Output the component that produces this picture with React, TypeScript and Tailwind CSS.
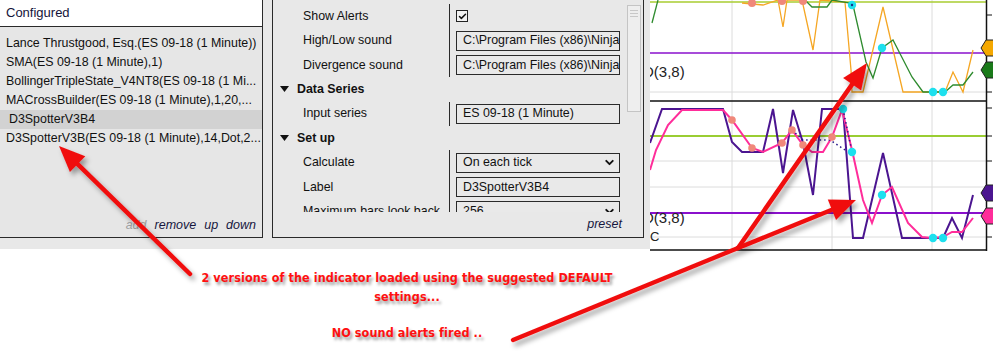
import { Check, ChevronDown } from "lucide-react";

const listItems = [
  "Lance Thrustgood, Esq.(ES 09-18 (1 Minute))",
  "SMA(ES 09-18 (1 Minute),1)",
  "BollingerTripleState_V4NT8(ES 09-18 (1 Mi...",
  "MACrossBuilder(ES 09-18 (1 Minute),1,20,...",
  "D3SpotterV3B4",
  "D3SpotterV3B(ES 09-18 (1 Minute),14,Dot,2...",
];

const Triangle = () => (
  <svg width="9" height="7" viewBox="0 0 9 7" className="mr-[8px]">
    <polygon points="0,0 9,0 4.5,6" fill="#111" />
  </svg>
);

const Box = ({ children }: { children: React.ReactNode }) => (
  <div className="w-[164px] h-[20px] border border-[#2a2a2a] bg-[#e9e9e9] flex items-center pl-[6px] pr-[3px] overflow-hidden whitespace-nowrap">
    {children}
  </div>
);

const PropRow = ({ label, children }: { label: string; children: React.ReactNode }) => (
  <div className="h-[24.4px] flex items-stretch">
    <div className="w-[176px] pl-[30px] flex items-center whitespace-nowrap">{label}</div>
    <div className="border-l border-[#2a2a2a] pl-[6px] flex items-center">{children}</div>
  </div>
);

const Header = ({ label }: { label: string }) => (
  <div className="h-[24.4px] flex items-center pl-[7px] font-bold">
    <Triangle />
    {label}
  </div>
);

const Chart = () => {
  const orange =
    "742,3 763,5 778,0 783,27 787,0 802,0 813,50 820,0 845,2 851,70 852,92 863,92 883,7 903,92 945,92 953,72 963,92 973,50";
  const green2 =
    "805,0 812,7 827,7 832,0 850,3 853,5 866,62 873,78 882,48 893,40 912,77 923,92 945,92 953,85 963,85 973,72";
  const indigo =
    "650,143 662,109 723,109 732,142 742,152 763,152 773,109 783,173 793,110 803,143 813,195 822,109 843,109 853,238 863,238 883,153 902,238 943,238 952,218 962,238 973,195";
  const pink =
    "650,170 656,150 668,125 682,110 723,110 732,120 752,148 763,152 782,143 792,130 803,145 812,152 823,152 832,137 842,110 852,150 863,200 872,223 882,195 892,187 908,223 922,237 932,238 943,237 952,232 962,232 973,218";
  const ticks = [15, 53, 92, 108, 136, 161, 187, 213, 237];
  const marker = (y: number, c: string) => (
    <polygon
      key={y}
      points={`981,${y} 986,${y - 8} 994,${y - 8} 994,${y + 8} 986,${y + 8}`}
      fill={c}
      stroke="#222"
      strokeWidth="1"
    />
  );
  return (
    <svg width="343" height="252" viewBox="650 0 343 252" className="block">
      <rect x="650" y="0" width="343" height="252" fill="#fff" />
      {[732, 832, 932].map((x) => (
        <line key={x} x1={x} y1="0" x2={x} y2="250" stroke="#dcdcdc" strokeWidth="1" />
      ))}
      {[92, 161, 187, 237].map((y) => (
        <line key={y} x1="650" y1={y} x2="986" y2={y} stroke="#dcdcdc" strokeWidth="1" />
      ))}
      <line x1="650" y1="2" x2="986" y2="2" stroke="#a8cc30" strokeWidth="1.5" />
      <line x1="650" y1="53" x2="986" y2="53" stroke="#8a10cc" strokeWidth="1.5" />
      <polyline points={orange} fill="none" stroke="#f5a623" strokeWidth="1.3" />
      <polyline points="652,23 658,0" fill="none" stroke="#2e8b2e" strokeWidth="1.3" />
      <polyline points={green2} fill="none" stroke="#2e8b2e" strokeWidth="1.3" />
      <circle cx="752" cy="3" r="4" fill="#f0887a" />
      <circle cx="782" cy="1" r="4" fill="#f0887a" />
      <circle cx="803" cy="1" r="4" fill="#f0887a" />
      {[
        [852, 5],
        [882, 48],
        [933, 92],
        [943, 92],
      ].map(([x, y]) => (
        <circle key={`u${x}`} cx={x} cy={y} r="4.2" fill="#1ee0ee" />
      ))}
      <circle cx="852" cy="5" r="1.2" fill="#1a2a8a" />
      <text x="643" y="77" fontSize="15" fontFamily="Liberation Sans, Arial, sans-serif" fill="#222">
        D(3,8)
      </text>
      <line x1="650" y1="101" x2="986" y2="101" stroke="#111" strokeWidth="1.5" />
      <line x1="650" y1="136" x2="986" y2="136" stroke="#9acd32" strokeWidth="2" />
      <line x1="650" y1="213" x2="986" y2="213" stroke="#8a10cc" strokeWidth="2" />
      <polyline points={indigo} fill="none" stroke="#4b1590" strokeWidth="2" />
      <polyline points={pink} fill="none" stroke="#ff2d9a" strokeWidth="2" />
      <polyline points="792,130 803,140 830,140 845,150" fill="none" stroke="#2a1a8a" strokeWidth="1.5" strokeDasharray="1.5 3" />
      <polyline points="843,109 852,152" fill="none" stroke="#2a1a8a" strokeWidth="1.5" strokeDasharray="1.5 3" />
      {[
        [732, 120],
        [752, 148],
        [782, 143],
        [792, 130],
        [803, 145],
        [832, 137],
      ].map(([x, y]) => (
        <circle key={`s${x}`} cx={x} cy={y} r="3.8" fill="#f0887a" />
      ))}
      {[
        [843, 109],
        [852, 152],
        [882, 195],
        [933, 238],
        [943, 238],
      ].map(([x, y]) => (
        <circle key={`c${x}`} cx={x} cy={y} r="4.2" fill="#1ee0ee" />
      ))}
      <text x="643" y="223" fontSize="15" fontFamily="Liberation Sans, Arial, sans-serif" fill="#222">
        D(3,8)
      </text>
      <text x="640" y="241" fontSize="13" fontFamily="Liberation Sans, Arial, sans-serif" fill="#222">
        OC
      </text>
      <line x1="650" y1="250" x2="987" y2="250" stroke="#111" strokeWidth="1.5" />
      <line x1="986.5" y1="0" x2="986.5" y2="251" stroke="#111" strokeWidth="1.5" />
      {ticks.map((y) => (
        <line key={`t${y}`} x1="986" y1={y} x2="992" y2={y} stroke="#111" strokeWidth="1" />
      ))}
      {marker(48, "#f5a800")}
      {marker(70, "#1a7a1a")}
      {marker(193, "#4b1590")}
      {marker(216, "#ff2d9a")}
    </svg>
  );
};

const Arrows = () => {
  const head = (x1: number, y1: number, x2: number, y2: number) => {
    const a = Math.atan2(y2 - y1, x2 - x1);
    const len = 26;
    const w = 11;
    const bx = x2 - len * Math.cos(a);
    const by = y2 - len * Math.sin(a);
    const px = -Math.sin(a) * w;
    const py = Math.cos(a) * w;
    return `${x2},${y2} ${bx + px},${by + py} ${bx - px},${by - py}`;
  };
  const shaft = (x1: number, y1: number, x2: number, y2: number) => {
    const a = Math.atan2(y2 - y1, x2 - x1);
    return { x2: x2 - 20 * Math.cos(a), y2: y2 - 20 * Math.sin(a) };
  };
  const arrows: [number, number, number, number][] = [
    [190, 274, 59, 146],
    [738, 248, 867, 63],
    [738, 248, 856, 200],
  ];
  return (
    <svg className="absolute inset-0 pointer-events-none" width="993" height="362">
      <defs>
        <filter id="sh" x="-20%" y="-20%" width="140%" height="140%">
          <feDropShadow dx="3" dy="4" stdDeviation="2.5" floodColor="#000" floodOpacity="0.35" />
        </filter>
      </defs>
      <g filter="url(#sh)">
        <line x1="513" y1="340" x2="738" y2="248" stroke="#f01010" strokeWidth="4.5" strokeLinecap="round" />
        {arrows.map(([x1, y1, x2, y2], i) => {
          const s = shaft(x1, y1, x2, y2);
          return (
            <g key={i}>
              <line x1={x1} y1={y1} x2={s.x2} y2={s.y2} stroke="#f01010" strokeWidth="4.5" strokeLinecap="round" />
              <polygon points={head(x1, y1, x2, y2)} fill="#f01010" />
            </g>
          );
        })}
      </g>
    </svg>
  );
};

export default function App() {
  return (
    <div className="relative w-[993px] h-[362px] bg-white overflow-hidden font-['Liberation_Sans',Arial,sans-serif] text-[12.4px] text-[#111]">
      <div className="flex h-[252px]">
        <div className="w-[650px] h-[249px] bg-[#e8e8e8] flex">
          <div className="w-[263px] h-[238px] border-r border-b border-[#2a2a2a] bg-[#e6e6e6] flex flex-col">
            <div className="h-[27px] bg-white border-b border-[#2a2a2a] flex items-center pl-[6px] text-[13px] text-[#14143a]">
              Configured
            </div>
            <div className="flex-1 pt-[7px]">
              {listItems.map((t, i) => (
                <div
                  key={t}
                  className={
                    i === 4
                      ? "h-[19px] flex items-center pl-[9px] bg-[#d2d2d2] whitespace-nowrap overflow-hidden"
                      : "h-[19px] flex items-center pl-[6px] whitespace-nowrap overflow-hidden"
                  }
                >
                  {t}
                </div>
              ))}
            </div>
            <div className="h-[24px] flex items-center justify-end gap-[8px] pr-[6px] italic text-[12.5px] text-[#16163e]">
              <span className="text-[#a0a0a0]">add</span>
              <span>remove</span>
              <span>up</span>
              <span>down</span>
            </div>
          </div>
          <div className="ml-[9px] w-[372px] h-[238px] border-l border-r border-b border-[#2a2a2a] bg-[#e8e8e8] flex flex-col">
            <div className="flex h-[212px] overflow-hidden">
              <div className="w-[354px] pt-[4px]">
                <PropRow label="Show Alerts">
                  <div className="w-[12px] h-[12px] border border-[#222] bg-[#f2f2f2] flex items-center justify-center">
                    <Check size={9} strokeWidth={4} color="#111" />
                  </div>
                </PropRow>
                <PropRow label="High/Low sound">
                  <Box>C:\Program Files (x86)\NinjaTrader 8\sounds\Alert1.wav</Box>
                </PropRow>
                <PropRow label="Divergence sound">
                  <Box>C:\Program Files (x86)\NinjaTrader 8\sounds\Alert2.wav</Box>
                </PropRow>
                <Header label="Data Series" />
                <PropRow label="Input series">
                  <Box>ES 09-18 (1 Minute)</Box>
                </PropRow>
                <Header label="Set up" />
                <PropRow label="Calculate">
                  <Box>
                    <span className="flex-1">On each tick</span>
                    <ChevronDown size={13} strokeWidth={3.5} color="#111" />
                  </Box>
                </PropRow>
                <PropRow label="Label">
                  <Box>D3SpotterV3B4</Box>
                </PropRow>
                <PropRow label="Maximum bars look back">
                  <Box>
                    <span className="flex-1">256</span>
                    <ChevronDown size={13} strokeWidth={3.5} color="#111" />
                  </Box>
                </PropRow>
              </div>
              <div className="w-[15px] pt-[5px]">
                <div className="w-[14px] h-[107px] border border-[#c4c4c4] bg-[#eeeeee] flex flex-col items-center pt-[4px] gap-[2px]">
                  <div className="w-[8px] h-px bg-[#c8c8c8]" />
                  <div className="w-[8px] h-px bg-[#c8c8c8]" />
                  <div className="w-[8px] h-px bg-[#c8c8c8]" />
                </div>
              </div>
            </div>
            <div className="flex-1 flex items-center justify-end pr-[21px] italic text-[12.5px] text-[#16163e]">
              preset
            </div>
          </div>
        </div>
        <Chart />
      </div>
      <div className="w-[814px] pt-[16px] text-center font-['Comic_Sans_MS','DejaVu_Sans_Condensed','DejaVu_Sans',sans-serif] font-bold text-[12.5px] tracking-[0.1px] leading-[19px] text-[#ff1010] [text-shadow:2px_3px_3px_rgba(0,0,0,0.4)]">
        <div>2 versions of the indicator loaded using the suggested DEFAULT</div>
        <div>settings...</div>
        <div className="mt-[17px]">NO sound alerts fired ..</div>
      </div>
      <Arrows />
    </div>
  );
}
